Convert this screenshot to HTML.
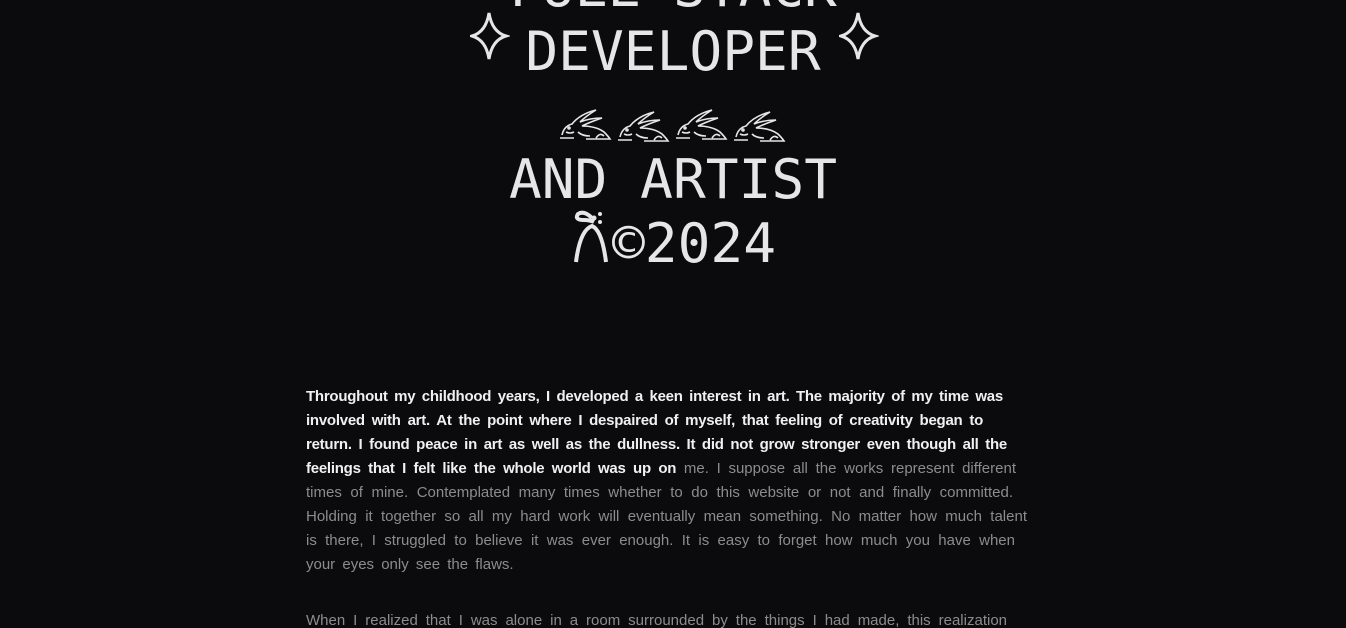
<!DOCTYPE html>
<html><head><meta charset="utf-8"><style>
html,body{margin:0;padding:0;background:#0b0b0d;width:1346px;height:628px;overflow:hidden;position:relative}
.h{position:absolute;left:0;width:1346px;text-align:center;font-family:"DejaVu Sans Mono","Liberation Mono",monospace;font-size:54.5px;line-height:64px;color:#e6e6e8;white-space:pre}
.l{position:absolute;left:306px;height:24px;line-height:24px;font-family:"Liberation Sans",sans-serif;font-size:15px;color:#8c8c8c;text-align:justify;text-align-last:justify;white-space:nowrap;overflow:visible}
.b{color:#f0f0f2;font-weight:bold;letter-spacing:-0.25px}
svg{position:absolute}
</style></head><body>
<div class="h" style="top:-45px">FULL STACK</div>
<div class="h" style="top:19px">DEVELOPER</div>
<div class="h" style="top:147px">AND ARTIST</div>
<div class="h" style="top:211px;left:612px;width:auto;text-align:left">©2024</div>

<svg style="left:470px;top:12px" width="40" height="48" viewBox="0 0 40 48"><path d="M19 1 Q22 20 36 24 Q22 28 19 47 Q16 28 2 24 Q16 20 19 1Z" fill="none" stroke="#e6e6e8" stroke-width="3"/></svg>
<svg style="left:839px;top:12px" width="40" height="48" viewBox="0 0 40 48"><path d="M19 1 Q22 20 36 24 Q22 28 19 47 Q16 28 2 24 Q16 20 19 1Z" fill="none" stroke="#e6e6e8" stroke-width="3"/></svg>

<svg style="left:556px;top:102px" width="240" height="42" viewBox="0 0 240 42">
<g fill="none" stroke="#e6e6e8" stroke-width="1.6">
<g id="r"><path d="M4 36 L18 36 M6 33 Q8 24 16 22 Q24 12 40 8 Q30 14 24 20 Q34 16 46 16 Q34 20 26 24 Q40 24 48 30 Q52 34 54 37 L30 37 M10 30 Q14 32 18 30 M22 30 Q26 34 34 34 M40 36 Q44 30 48 34"/><circle cx="13" cy="26" r="1"/></g>
<use href="#r" x="58" y="2"/><use href="#r" x="116"/><use href="#r" x="174" y="2"/>
</g></svg>

<svg style="left:570px;top:208px" width="42" height="56" viewBox="0 0 42 56">
<g fill="none" stroke="#e6e6e8" stroke-width="4"><path d="M22 10 Q14 2 8 6 Q4 12 14 12 Q20 12 24 14"/><path d="M6 54 Q10 22 22 18 Q32 22 36 54"/></g>
<circle cx="24" cy="10" r="2.5" fill="#e6e6e8"/><circle cx="30" cy="6" r="2" fill="#e6e6e8"/><circle cx="30" cy="14" r="2" fill="#e6e6e8"/></svg>

<div class="l b" style="top:385px;width:697px">Throughout my childhood years, I developed a keen interest in art. The majority of my time was</div>
<div class="l b" style="top:409px;width:677px">involved with art. At the point where I despaired of myself, that feeling of creativity began to</div>
<div class="l b" style="top:433px;width:701px">return. I found peace in art as well as the dullness. It did not grow stronger even though all the</div>
<div class="l" style="top:457px;width:710px"><span class="b">feelings that I felt like the whole world was up on</span> me. I suppose all the works represent different</div>
<div class="l" style="top:481px;width:707px">times of mine. Contemplated many times whether to do this website or not and finally committed.</div>
<div class="l" style="top:505px;width:721px">Holding it together so all my hard work will eventually mean something. No matter how much talent</div>
<div class="l" style="top:529px;width:709px">is there, I struggled to believe it was ever enough. It is easy to forget how much you have when</div>
<div class="l" style="top:553px;text-align-last:left;word-spacing:3px">your eyes only see the flaws.</div>
<div class="l" style="top:609px;width:701px">When I realized that I was alone in a room surrounded by the things I had made, this realization</div>
</body></html>
